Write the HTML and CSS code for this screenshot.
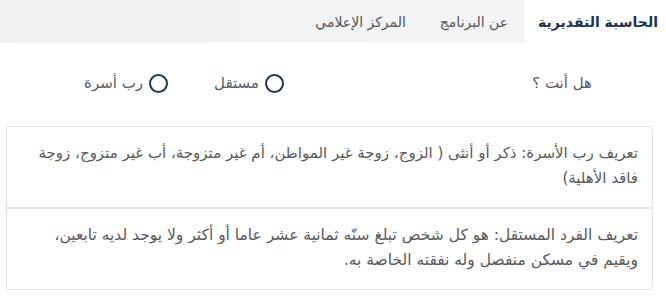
FILE: index.html
```html
<!doctype html>
<html lang="ar" dir="rtl">
<head>
    <meta charset="UTF-8">
    <meta name="viewport" content="width=device-width, initial-scale=1.0">
    <title>الحاسبة التقديرية</title>
    <link rel="stylesheet" href="styles.css">
</head>
<body>
<div class="tabs">
    <a class="tab active" href="#">الحاسبة التقديرية</a>
    <a class="tab" href="#">عن البرنامج</a>
    <a class="tab" href="#">المركز الإعلامي</a>
</div>

<div class="form-row">
    <div class="question">هل أنت ؟</div>
    <label class="radio"><span class="circle"></span>مستقل</label>
    <label class="radio"><span class="circle"></span>رب أسرة</label>
</div>

<div class="info-box">
    <p class="def-family">تعريف رب الأسرة: ذكر أو أنثى ( الزوج، زوجة غير المواطن، أم غير متزوجة، أب غير متزوج، زوجة فاقد الأهلية)</p>
    <p>تعريف الفرد المستقل: هو كل شخص تبلغ سنّه ثمانية عشر عاما أو أكثر ولا يوجد لديه تابعين، ويقيم في مسكن منفصل وله نفقته الخاصة به.</p>
</div>
</body>
</html>
```

FILE: styles.css
```css
/* Global Styles */
body {
    margin: 0;
    font-family: "DejaVu Sans", sans-serif;
    color: #5a5a5a;
    background: #fff;
}

/* Tabs */
.tabs {
    display: flex;
    height: 43px;
    background: linear-gradient(to left, #f5f6f7, #eef0f2);
}

.tab {
    display: flex;
    align-items: center;
    padding: 0 17px;
    font-size: 14px;
    color: #555;
    text-decoration: none;
    white-space: nowrap;
}

.tab.active {
    background: #fff;
    color: #1c3553;
    font-weight: bold;
    padding: 0 8px 0 13px;
}

/* Form row */
.form-row {
    display: flex;
    align-items: center;
    height: 80px;
    padding-right: 74px;
}

.question {
    font-size: 15px;
    width: 308px;
}

.radio {
    display: flex;
    align-items: center;
    gap: 6px;
    font-size: 15px;
    margin-left: 46px;
}

.circle {
    width: 15px;
    height: 15px;
    border: 2px solid #1c3553;
    border-radius: 50%;
}

/* Info box */
.info-box {
    margin: 3px 13px 0 6px;
    border: 1px solid #e2e2e2;
    border-radius: 3px;
}

.info-box p {
    margin: 0;
    padding: 14px 14px 16px 12px;
    font-size: 15.5px;
    line-height: 25px;
}

.info-box p.def-family {
    font-size: 15px;
}

.info-box p + p {
    border-top: 2px solid #e6e6e6;
}
```
